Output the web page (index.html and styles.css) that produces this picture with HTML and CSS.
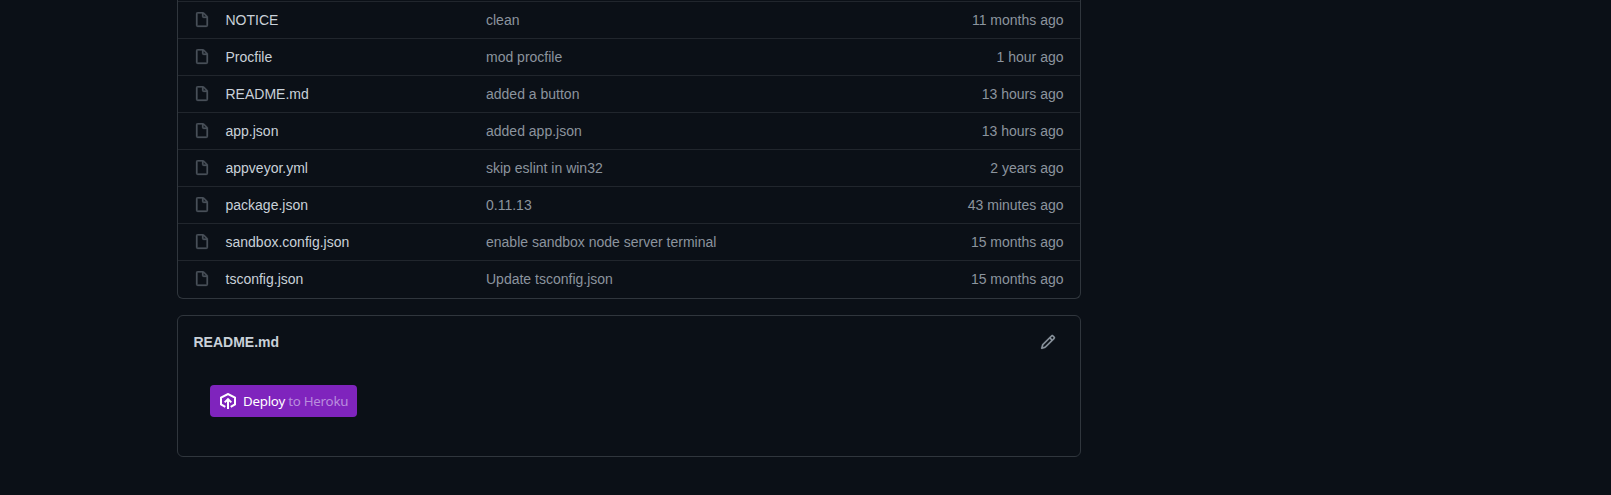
FILE: index.html
```html
<!DOCTYPE html>
<html lang="en">
<head>
<meta charset="utf-8">
<title>Repository files</title>
<link rel="stylesheet" href="styles.css">
</head>
<body>
<svg width="0" height="0" class="sprite" aria-hidden="true">
<symbol id="file" viewBox="0 0 16 16"><path fill-rule="evenodd" d="M3.75 1.5a.25.25 0 00-.25.25v11.5c0 .138.112.25.25.25h8.5a.25.25 0 00.25-.25V6H9.75A1.75 1.75 0 018 4.25V1.5H3.75zm5.75.56v2.19c0 .138.112.25.25.25h2.19L9.5 2.06zM2 1.75C2 .784 2.784 0 3.75 0h5.086c.464 0 .909.184 1.237.513l3.414 3.414c.329.328.513.773.513 1.237v8.086A1.75 1.75 0 0112.25 15h-8.5A1.75 1.75 0 012 13.25V1.75z"/></symbol>
</svg>
<main class="content">
<section class="files">
<div class="row"><svg class="icon"><use href="#file"/></svg><span class="name">NOTICE</span><span class="message">clean</span><span class="age">11 months ago</span></div>
<div class="row"><svg class="icon"><use href="#file"/></svg><span class="name">Procfile</span><span class="message">mod procfile</span><span class="age">1 hour ago</span></div>
<div class="row"><svg class="icon"><use href="#file"/></svg><span class="name">README.md</span><span class="message">added a button</span><span class="age">13 hours ago</span></div>
<div class="row"><svg class="icon"><use href="#file"/></svg><span class="name">app.json</span><span class="message">added app.json</span><span class="age">13 hours ago</span></div>
<div class="row"><svg class="icon"><use href="#file"/></svg><span class="name">appveyor.yml</span><span class="message">skip eslint in win32</span><span class="age">2 years ago</span></div>
<div class="row"><svg class="icon"><use href="#file"/></svg><span class="name">package.json</span><span class="message">0.11.13</span><span class="age">43 minutes ago</span></div>
<div class="row"><svg class="icon"><use href="#file"/></svg><span class="name">sandbox.config.json</span><span class="message">enable sandbox node server terminal</span><span class="age">15 months ago</span></div>
<div class="row"><svg class="icon"><use href="#file"/></svg><span class="name">tsconfig.json</span><span class="message">Update tsconfig.json</span><span class="age">15 months ago</span></div>
</section>
<section class="readme">
<header class="readme-header">
<h2 class="readme-title">README.md</h2>
<svg class="pencil" viewBox="0 0 16 16"><path fill-rule="evenodd" d="M11.013 1.427a1.75 1.75 0 012.474 0l1.086 1.086a1.75 1.75 0 010 2.474l-8.61 8.61c-.21.21-.47.364-.756.445l-3.251.93a.75.75 0 01-.927-.928l.929-3.25a1.75 1.75 0 01.445-.758l8.61-8.61zm1.414 1.06a.25.25 0 00-.354 0L10.811 3.75l1.439 1.44 1.263-1.263a.25.25 0 000-.354l-1.086-1.086zM11.189 6.25L9.75 4.81l-6.286 6.287a.25.25 0 00-.064.108l-.558 1.953 1.953-.558a.249.249 0 00.108-.064l6.286-6.286z"/></svg>
</header>
<a class="deploy">
<svg class="heroku" viewBox="0 0 16 16"><path d="M5.3 13.8L1 11.4V4.6L8 1l7 3.6v6.8l-4.3 2.4M8 16V6.2M4.7 9.4L8 6.1l3.3 3.3"/></svg>
<span class="deploy-text"><span class="deploy-verb">Deploy</span> to Heroku</span>
</a>
</section>
</main>
</body>
</html>
```
FILE: styles.css
```css
* { box-sizing: border-box; }
body {
  margin: 0;
  background: #0b1017;
  color: #c9d1d9;
  font: 14px/20px "Liberation Sans", Arial, sans-serif;
  overflow: hidden;
}
.sprite { display: block; height: 0; }
.content { width: 904px; margin-left: 176.5px; }
.files {
  height: 299px;
  padding-top: 1px;
  border: 1px solid #30363d;
  border-top: 0;
  border-radius: 0 0 6px 6px;
}
.row {
  display: grid;
  grid-template-columns: 16px 244.5px 1fr auto;
  column-gap: 16px;
  height: 37px;
  padding: 8px 16px;
  border-top: 1px solid #21262d;
}
.icon {
  width: 16px;
  height: 16px;
  margin-top: 2px;
  fill: #484f58;
  stroke: #484f58;
  stroke-width: .25;
  overflow: visible;
}
.message, .age { color: #8b949e; }
.readme {
  height: 142px;
  margin-top: 16px;
  border: 1px solid #30363d;
  border-radius: 6px;
}
.readme-header {
  display: flex;
  align-items: center;
  justify-content: space-between;
  padding: 16px 24px 0 16px;
}
.readme-title { margin: 0; font-size: 14px; line-height: 20px; }
.pencil { width: 16px; height: 16px; fill: #8b949e; stroke: #8b949e; stroke-width: .2; }
.deploy {
  display: flex;
  align-items: center;
  width: 147px;
  height: 32px;
  margin: 33px 0 0 32.5px;
  padding-left: 10px;
  gap: 7px;
  border-radius: 4px;
  background: #7f24bd;
}
.heroku { width: 16px; height: 16px; fill: none; stroke: #fff; stroke-width: 2; }
.deploy-text {
  color: #b98ddd;
  font: 13.3px/20px "Noto Sans", sans-serif;
  letter-spacing: -.24px;
  white-space: nowrap;
}
.deploy-verb { color: #fff; }
```
